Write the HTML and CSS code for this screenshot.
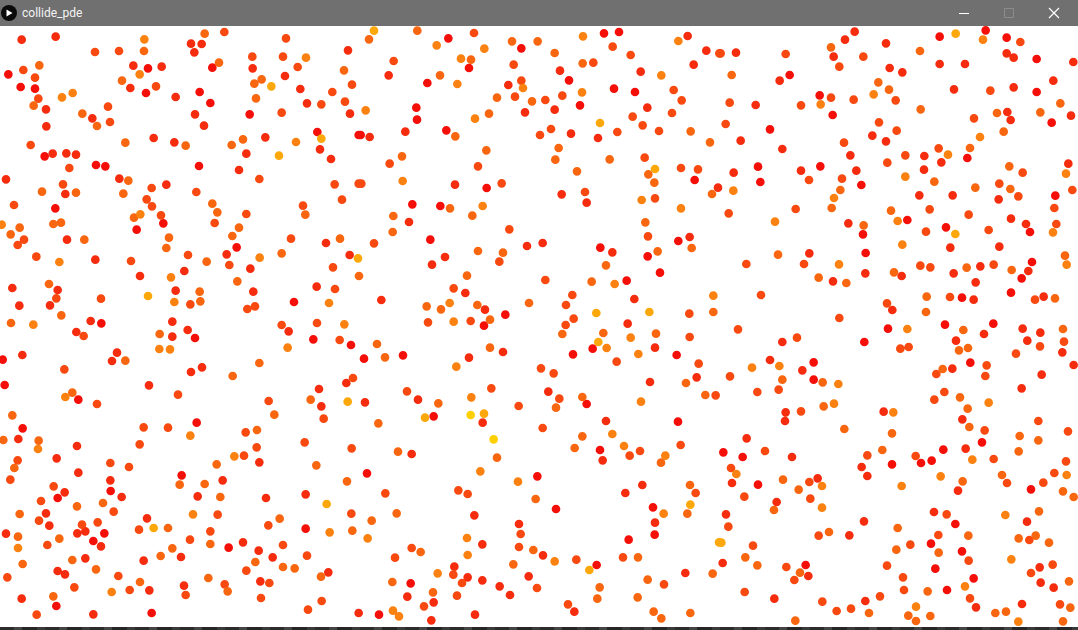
FILE: index.html
```html
<!DOCTYPE html>
<html lang="en">
<head>
<meta charset="utf-8">
<title>collide_pde</title>
<link rel="stylesheet" href="styles.css">
</head>
<body>
<div class="window">
  <header class="titlebar">
    <svg class="app-icon" width="16" height="16" viewBox="0 0 16 16"><circle cx="8" cy="8" r="8" fill="#0a0a0a"/><path d="M5.5 4.6 11.5 8 5.5 11.4Z" fill="#fff"/></svg>
    <span class="title">collide_pde</span>
    <div class="controls">
      <svg class="ctl" width="46" height="26" viewBox="0 0 46 26"><path d="M18 13.5H28" stroke="#fff" fill="none"/></svg>
      <svg class="ctl" width="46" height="26" viewBox="0 0 46 26"><path d="M18.500 8.500H27.500V17.500H18.500Z" stroke="#8c8c8c" fill="none"/></svg>
      <svg class="ctl" width="46" height="26" viewBox="0 0 46 26"><path d="M18 8 28 18M28 8 18 18" stroke="#fff" stroke-width="1.200" fill="none"/></svg>
    </div>
  </header>
  <svg class="canvas" viewBox="0 0 1078 601">
    <g transform="scale(.33333)">
      <path class="a" d="M25 145h0M62 183h0M105 188h0M438 201h0M444 127h0M637 125h0M599 198h0M631 231h0M749 265h0M134 391h0M288 417h0M316 421h0M597 420h0M952 318h0M1076 327h0M166 547h0M490 592h0"/>
      <path class="b" d="M65 41h0M167 32h0M573 53h0M605 54h0M583 79h0M1044 73h0M138 250h0M400 119h0M485 122h0M391 186h0M758 127h0M855 150h0M901 189h0M527 213h0M921 232h0M1050 263h0M585 265h0M612 299h0M277 277h0M139 301h0M461 336h0M523 349h0M796 334h0M960 370h0M739 383h0M993 399h0M158 383h0M199 382h0M228 386h0M717 432h0M18 460h0M196 504h0M358 458h0M499 476h0"/>
      <path class="c" d="M285 78h0M357 75h0M673 18h0M858 37h0M70 132h0M105 155h0M115 218h0M468 181h0M757 92h0M849 92h0M893 123h0M997 198h0M1056 176h0M964 235h0M1035 227h0M845 260h0M324 242h0M330 288h0M92 357h0M208 426h0M189 475h0M455 486h0M589 498h0M778 459h0M1076 473h0M42 537h0M440 520h0M456 541h0M483 568h0M739 564h0M909 539h0M1026 521h0M1004 475h0M644 591h0"/>
      <path class="d" d="M432 75h0M614 23h0M118 118h0M101 239h0M366 164h0M657 110h0M1032 133h0M785 160h0M768 217h0M763 173h0M247 263h0M291 300h0M376 350h0M557 359h0M695 357h0M729 340h0M126 497h0M228 500h0M385 464h0M370 503h0M637 533h0M652 559h0M402 575h0M916 566h0M160 594h0M183 590h0"/>
      <path class="e" d="M433 40h0M186 214h0M218 201h0M419 145h0M918 95h0M888 348h0M421 565h0M5 596h0"/>
      <path class="f" d="M814 181h0M964 338h0M837 389h0"/>
    </g>
    <g transform="translate(360 0) scale(.33333)">
      <path class="a" d="M265 37h0M732 22h0M777 18h0M484 67h0M327 126h0M202 171h0M627 163h0M762 188h0M825 198h0M169 245h0M171 281h0M660 238h0M2 327h0M259 313h0M380 486h0M1004 462h0M241 540h0M157 535h0"/>
      <path class="b" d="M983 30h0M1039 74h0M1001 116h0M600 134h0M842 137h0M86 148h0M445 177h0M495 259h0M584 251h0M862 245h0M136 317h0M29 333h0M633 323h0M714 336h0M285 476h0M1074 485h0M605 505h0M680 530h0M147 588h0"/>
      <path class="c" d="M342 21h0M812 87h0M758 62h0M1078 82h0M101 105h0M461 116h0M700 110h0M484 164h0M941 192h0M465 212h0M556 222h0M607 209h0M965 223h0M936 261h0M818 272h0M848 298h0M897 315h0M772 318h0M573 309h0M540 327h0M89 413h0M354 421h0M854 395h0M963 426h0M1014 430h0M4 473h0M425 472h0M675 498h0M885 517h0"/>
      <path class="d" d="M27 40h0M172 14h0M456 46h0M533 46h0M584 81h0M333 101h0M668 112h0M240 148h0M516 226h0M387 263h0M411 215h0M286 331h0M992 316h0M1050 349h0M379 373h0M596 366h0M126 391h0M586 401h0M749 400h0M651 436h0M865 445h0M883 470h0M1056 504h0M270 547h0M337 569h0M100 570h0M856 589h0"/>
      <path class="e" d="M230 58h0M373 68h0M669 31h0M955 45h0M303 98h0M292 174h0M904 148h0M489 186h0M666 199h0M17 253h0M345 278h0M128 465h0M845 522h0M368 540h0M963 547h0"/>
      <path class="f" d="M42 14h0M720 291h0M885 429h0"/>
    </g>
    <g transform="translate(720 0) scale(.33333)">
      <path class="a" d="M659 32h0M797 13h0M860 35h0M950 99h0M209 147h0M950 198h0M299 208h0M338 267h0M995 290h0M150 310h0M114 422h0M301 421h0M121 468h0M424 477h0M1006 509h0M562 582h0M742 396h0"/>
      <path class="b" d="M48 80h0M375 41h0M404 17h0M498 52h0M341 92h0M860 82h0M881 95h0M1060 108h0M509 126h0M547 139h0M659 114h0M735 114h0M179 164h0M1000 164h0M702 190h0M881 184h0M107 237h0M862 258h0M872 282h0M1053 269h0M457 329h0M498 346h0M62 344h0M187 369h0M391 388h0M613 390h0M664 409h0M41 440h0M243 434h0M409 434h0M612 431h0M1045 413h0M598 508h0M698 508h0M836 520h0M873 578h0M918 594h0M385 592h0"/>
      <path class="c" d="M2 82h0M197 84h0M901 48h0M430 92h0M358 122h0M811 194h0M333 215h0M401 221h0M527 223h0M29 230h0M243 238h0M762 277h0M17 294h0M477 289h0M530 314h0M372 350h0M656 367h0M556 388h0M502 410h0M908 440h0M267 462h0M366 458h0M838 473h0M1057 492h0M895 511h0M26 562h0M227 549h0M629 550h0M1003 546h0M746 566h0M1009 594h0"/>
      <path class="d" d="M600 75h0M333 64h0M35 147h0M475 169h0M507 191h0M1021 232h0M602 250h0M831 261h0M961 259h0M851 317h0M750 366h0M868 421h0M643 467h0M361 492h0M871 489h0M766 485h0M335 546h0M513 554h0M431 598h0"/>
      <path class="e" d="M789 41h0M461 205h0M302 235h0M684 386h0M1038 443h0M556 452h0M40 494h0M342 516h0M165 587h0M533 585h0M780 333h0"/>
      <path class="f" d="M707 23h0"/>
    </g>
    <g transform="translate(0 200) scale(.33333)">
      <path class="a" d="M410 11h0M710 64h0M585 336h0M304 292h0M882 228h0M940 340h0M1053 357h0M235 521h0M14 477h0M8 401h0M590 590h0"/>
      <path class="b" d="M680 85h0M286 101h0M1049 87h0M751 128h0M553 135h0M420 150h0M37 186h0M173 192h0M527 194h0M760 197h0M950 182h0M150 238h0M58 239h0M272 285h0M517 287h0M229 318h0M517 332h0M866 316h0M351 380h0M336 405h0M573 438h0M606 424h0M447 478h0M1039 471h0M964 541h0M957 489h0M201 41h0M978 51h0M67 387h0M563 312h0"/>
      <path class="c" d="M72 41h0M53 57h0M873 38h0M109 92h0M393 105h0M564 87h0M688 117h0M999 124h0M1005 189h0M303 218h0M169 217h0M571 235h0M765 241h0M845 297h0M951 291h0M251 330h0M1019 342h0M193 430h0M1059 456h0M534 506h0M291 534h0M806 525h0M971 578h0M742 249h0"/>
      <path class="d" d="M59 5h0M32 25h0M253 41h0M507 35h0M499 66h0M717 5h0M697 30h0M1020 38h0M620 107h0M845 82h0M712 166h0M1077 150h0M147 174h0M599 197h0M601 226h0M184 268h0M33 291h0M479 324h0M376 404h0M778 411h0M698 450h0M217 500h0M932 521h0M37 568h0M823 566h0"/>
      <path class="e" d="M178 108h0M779 95h0M513 154h0M523 228h0M987 231h0M100 296h0M1033 295h0M478 369h0M510 370h0M863 365h0M196 513h0"/>
      <path class="f" d="M1074 97h0M444 210h0M1043 527h0"/>
    </g>
    <g transform="translate(360 200) scale(.33333)">
      <path class="a" d="M211 41h0M721 65h0M955 45h0M863 91h0M800 164h0M900 140h0M436 266h0M372 299h0M698 368h0M12 398h0M129 388h0M639 385h0M950 387h0M680 534h0M954 587h0M221 571h0"/>
      <path class="b" d="M501 60h0M548 51h0M255 93h0M216 116h0M757 79h0M989 33h0M316 201h0M64 222h0M375 251h0M823 219h0M885 365h0M429 378h0M327 395h0M1010 454h0M870 468h0M565 497h0M15 529h0M174 521h0M368 590h0M738 585h0M803 293h0"/>
      <path class="c" d="M42 52h0M448 10h0M418 107h0M864 31h0M281 187h0M556 162h0M637 207h0M618 237h0M204 289h0M332 285h0M641 278h0M617 297h0M988 263h0M989 333h0M770 407h0M543 427h0M581 442h0M1016 413h0M141 496h0M394 487h0M598 518h0M1067 508h0M476 540h0"/>
      <path class="d" d="M98 18h0M354 75h0M429 80h0M738 118h0M995 66h0M893 76h0M321 149h0M695 167h0M200 241h0M243 250h0M352 237h0M507 231h0M390 281h0M1060 258h0M51 354h0M607 324h0M730 321h0M888 323h0M75 394h0M390 365h0M978 471h0M667 513h0M1036 507h0M235 532h0M588 545h0M55 592h0"/>
      <path class="e" d="M764 174h0M269 231h0M1060 209h0M281 287h0M812 335h0M740 366h0M835 384h0M289 422h0M334 514h0M843 527h0"/>
      <path class="f" d="M709 261h0M868 258h0M715 348h0M195 575h0M372 563h0"/>
      <path class="g" d="M332 567h0"/>
    </g>
    <g transform="translate(720 200) scale(.33333)">
      <path class="a" d="M930 18h0M678 4h0M437 81h0M905 157h0M873 200h0M820 293h0M504 308h0M675 296h0M281 409h0M281 461h0M433 348h0M726 215h0M751 410h0M429 25h0M936 108h0"/>
      <path class="b" d="M268 82h0M691 65h0M838 62h0M339 166h0M436 142h0M545 150h0M781 121h0M701 142h0M925 135h0M767 169h0M761 221h0M971 212h0M517 252h0M792 324h0M908 308h0M961 320h0M922 344h0M187 348h0M150 402h0M708 344h0M697 428h0M1061 417h0M965 446h0M905 487h0M247 433h0M197 559h0M195 585h0M491 557h0M727 580h0M1027 379h0"/>
      <path class="c" d="M806 12h0M618 17h0M79 114h0M252 114h0M601 119h0M631 124h0M821 116h0M123 207h0M690 213h0M945 221h0M501 232h0M358 276h0M54 310h0M231 335h0M1032 347h0M960 361h0M888 383h0M541 368h0M566 363h0M800 418h0M796 450h0M649 444h0M30 451h0M112 498h0M176 491h0M643 521h0M673 498h0M243 556h0M955 585h0"/>
      <path class="d" d="M174 86h0M1035 89h0M296 155h0M379 171h0M522 139h0M740 125h0M875 132h0M1005 217h0M620 212h0M618 258h0M730 312h0M1029 309h0M717 373h0M744 366h0M668 429h0M187 461h0M308 469h0M720 514h0M743 548h0M311 541h0"/>
      <path class="e" d="M547 56h0M999 19h0M357 115h0M1040 116h0M562 309h0M96 425h0M178 420h0M355 474h0M806 530h0M342 533h0M520 559h0"/>
      <path class="f" d="M706 24h0"/>
    </g>
    <g transform="translate(0 400) scale(.33333)">
      <path class="a" d="M68 7h0M545 148h0M332 195h0M173 216h0M686 365h0M169 540h0M455 561h0M313 322h0M280 345h0M917 308h0"/>
      <path class="b" d="M55 39h0M231 60h0M170 97h0M778 109h0M235 140h0M331 163h0M668 163h0M194 199h0M365 213h0M593 211h0M798 216h0M917 205h0M138 262h0M148 299h0M441 277h0M18 323h0M232 322h0M256 316h0M303 361h0M729 349h0M776 374h0M256 397h0M431 404h0M543 393h0M818 394h0M173 435h0M195 445h0M985 439h0M781 466h0M552 479h0M448 493h0M65 518h0M280 565h0M1076 561h0"/>
      <path class="c" d="M431 4h0M504 5h0M419 55h0M737 19h0M770 64h0M914 49h0M1055 67h0M53 103h0M331 111h0M387 123h0M732 89h0M31 161h0M161 181h0M123 225h0M341 257h0M293 289h0M246 296h0M117 284h0M653 266h0M805 298h0M1054 263h0M417 311h0M631 316h0M142 357h0M570 341h0M849 357h0M921 389h0M22 454h0M355 450h0M739 434h0M223 484h0M674 475h0M808 471h0M389 492h0M557 507h0M783 516h0M965 525h0M924 551h0M110 566h0"/>
      <path class="d" d="M10 42h0M116 44h0M771 12h0M43 126h0M650 115h0M949 118h0M539 176h0M614 174h0M1041 166h0M309 231h0M231 241h0M661 213h0M59 264h0M839 278h0M54 332h0M504 306h0M1057 314h0M178 338h0M631 354h0M68 414h0M217 402h0M482 390h0M517 367h0M766 408h0M288 430h0M849 423h0M884 427h0M963 452h0M420 468h0M625 456h0M683 496h0M160 511h0"/>
      <path class="e" d="M114 69h0M571 29h0M703 91h0M579 265h0M989 319h0M54 366h0M335 498h0"/>
      <path class="f" d="M980 234h0M461 306h0"/>
    </g>
    <g transform="translate(360 400) scale(.33333)">
      <path class="a" d="M720 72h0M532 151h0M21 142h0M588 249h0M879 244h0M884 326h0M806 341h0M710 417h0M152 472h0M57 566h0"/>
      <path class="b" d="M155 84h0M728 103h0M847 177h0M343 268h0M477 294h0M885 290h0M367 355h0M549 388h0M283 422h0M323 454h0M367 463h0M976 441h0M506 451h0M419 481h0M142 512h0M221 529h0M450 507h0M643 557h0M214 583h0M345 566h0M796 201h0"/>
      <path class="c" d="M548 6h0M840 75h0M809 89h0M962 57h0M76 202h0M295 193h0M323 204h0M1007 201h0M482 324h0M477 363h0M155 366h0M105 395h0M649 401h0M789 394h0M280 446h0M306 471h0M912 475h0M531 486h0M192 541h0M291 509h0M624 535h0"/>
      <path class="d" d="M667 31h0M644 66h0M903 110h0M114 77h0M411 95h0M527 219h0M990 177h0M982 263h0M110 262h0M35 284h0M182 378h0M520 372h0M834 394h0M460 415h0M1058 443h0M863 461h0M97 468h0M719 484h0M219 499h0M712 518h0M833 514h0M881 557h0M904 577h0M991 561h0"/>
      <path class="e" d="M757 24h0M792 60h0M916 89h0M361 136h0M474 167h0M911 263h0M23 337h0M321 336h0M323 387h0M584 406h0M233 442h0M99 554h0M117 571h0"/>
      <path class="f" d="M991 236h0M1077 349h0M688 432h0"/>
      <path class="g" d="M401 40h0"/>
    </g>
    <g transform="translate(720 400) scale(.33333)">
      <path class="a" d="M10 79h0M68 93h0M670 71h0M786 49h0M603 111h0M635 104h0M516 115h0M114 176h0M933 190h0M633 353h0M726 376h0M257 417h0M646 428h0M761 457h0M681 492h0M706 294h0"/>
      <path class="b" d="M80 37h0M216 93h0M737 68h0M293 157h0M36 171h0M425 123h0M442 150h0M714 194h0M170 228h0M18 265h0M642 258h0M432 286h0M921 287h0M388 328h0M8 411h0M265 450h0M959 424h0M962 470h0M1001 485h0M163 518h0M436 525h0M768 544h0M906 534h0"/>
      <path class="c" d="M794 13h0M1044 16h0M135 75h0M442 88h0M587 90h0M821 99h0M1038 106h0M33 126h0M268 168h0M861 171h0M1003 141h0M970 170h0M271 218h0M73 212h0M25 302h0M680 265h0M296 329h0M655 327h0M928 342h0M99 359h0M571 356h0M746 404h0M199 423h0M223 462h0M501 419h0M549 454h0M933 441h0M998 416h0M552 492h0M74 498h0M307 527h0M480 511h0M750 517h0M1020 535h0M350 555h0M393 548h0"/>
      <path class="d" d="M373 9h0M516 22h0M748 3h0M899 30h0M955 43h0M487 72h0M896 76h0M189 161h0M236 191h0M728 166h0M846 147h0M1029 196h0M1061 213h0M162 252h0M533 306h0M957 256h0M327 318h0M745 329h0M947 329h0M896 337h0M987 350h0M529 371h0M656 380h0M76 394h0M112 418h0M240 440h0M1047 466h0M623 496h0M1051 545h0M447 561h0M565 569h0M631 570h0M826 561h0M226 584h0M588 585h0M1029 586h0M858 557h0"/>
      <path class="e" d="M757 101h0M49 144h0M306 180h0M662 151h0M1040 147h0M545 180h0M306 245h0M856 267h0M874 400h0M735 481h0M588 542h0M895 587h0"/>
      <path class="f" d="M4 350h0"/>
    </g>
  </svg>
  <footer class="strip"></footer>
</div>
</body>
</html>
```

FILE: styles.css
```css
html, body {
  margin: 0;
  padding: 0;
  height: 100%;
  overflow: hidden;
  background: #fff;
}

.window {
  display: flex;
  flex-direction: column;
  width: 1078px;
  height: 630px;
}

.titlebar {
  display: flex;
  align-items: center;
  flex: 0 0 26px;
  padding-left: 1px;
  background: #707070;
  color: #f4f4f4;
  font-family: Roboto, "Open Sans", sans-serif;
  font-size: 12px;
}

.app-icon {
  flex: none;
}

.title {
  margin-left: 5px;
}

.controls {
  display: flex;
  margin-left: auto;
  margin-right: 2px;
}

.ctl {
  display: block;
  flex: none;
  margin-right: -1px;
}

.canvas {
  display: block;
  flex: 0 0 601px;
  width: 1078px;
  height: 601px;
  background: #fff;
}

.canvas path {
  fill: none;
  stroke-linecap: round;
  stroke-width: 26;
}

.a { stroke: #f40f08; }
.b { stroke: #f52c0e; }
.c { stroke: #f84a10; }
.d { stroke: #f96610; }
.e { stroke: #fb8210; }
.f { stroke: #fda80a; }
.g { stroke: #ffd000; }

.strip {
  flex: 0 0 3px;
  background: repeating-linear-gradient(90deg, #2c2c2c 0 14px, #444 14px 22px, #262626 22px 37px, #3a3a3a 37px 45px);
}
```
